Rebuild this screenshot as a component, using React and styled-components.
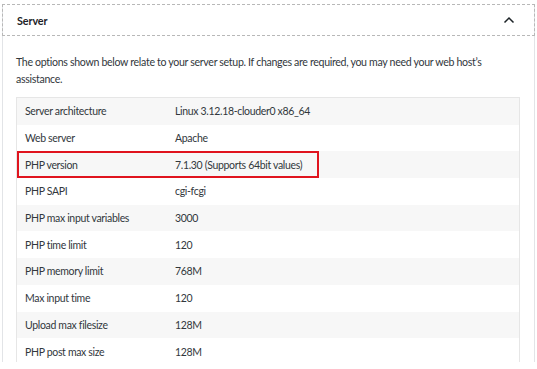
import styled, { createGlobalStyle } from "styled-components";

const GlobalStyle = createGlobalStyle`
  html, body {
    margin: 0;
    padding: 0;
    background: #ffffff;
  }
  body {
    font-family: Lato, "Noto Sans", sans-serif;
    color: #32373c;
  }
`;

const rows = [
  ["Server architecture", "Linux 3.12.18-clouder0 x86_64"],
  ["Web server", "Apache"],
  ["PHP version", "7.1.30 (Supports 64bit values)", true],
  ["PHP SAPI", "cgi-fcgi"],
  ["PHP max input variables", "3000"],
  ["PHP time limit", "120"],
  ["PHP memory limit", "768M"],
  ["Max input time", "120"],
  ["Upload max filesize", "128M"],
  ["PHP post max size", "128M"],
];

function App() {
  return (
    <>
      <GlobalStyle />
      <Page>
        <Panel>
          <Header>
            <span className="title">Server</span>
            <svg width="12" height="8" viewBox="0 0 12 8">
              <path d="M1.5 6.5 L6 2 L10.5 6.5" fill="none" stroke="#1d2327" strokeWidth="1.5" />
            </svg>
          </Header>
          <Body>
            <Intro>
              The options shown below relate to your server setup. If changes are required, you may need your web host’s assistance.
            </Intro>
            <Table>
              {rows.map(([label, value, marked], i) => (
                <Row key={label} $striped={i % 2 === 0}>
                  <Label>{label}</Label>
                  <Value>{value}</Value>
                  {marked && <Highlight />}
                </Row>
              ))}
            </Table>
          </Body>
        </Panel>
      </Page>
    </>
  );
}

export default App;

const Page = styled.div`
  width: 537px;
  height: 362px;
  overflow: hidden;
  padding-top: 4px;
  box-sizing: border-box;
`;

const Panel = styled.div`
  margin: 0 2px 0 2px;
  border-left: 1px solid #e2e4e7;
  border-right: 1px solid #e2e4e7;
  height: 100%;
`;

const Header = styled.div`
  display: flex;
  align-items: center;
  justify-content: space-between;
  height: 32px;
  box-sizing: border-box;
  margin-left: -1px;
  margin-right: -1px;
  border: 1px dashed #b8b8b8;
  padding: 0 19px 0 14px;

  .title {
    font-size: 10.8px;
    font-weight: 700;
    letter-spacing: -0.1px;
    color: #1d2327;
  }
`;

const Body = styled.div`
  padding: 0 14px 0 13px;
`;

const Intro = styled.p`
  margin: 18px 0 9px;
  font-size: 10.6px;
  letter-spacing: -0.32px;
  line-height: 17px;
  color: #32373c;
`;

const Table = styled.div`
  border: 1px solid #e6e6e6;
  border-bottom: none;
`;

const Row = styled.div`
  position: relative;
  display: grid;
  grid-template-columns: 150px 1fr;
  height: 26.7px;
  align-items: center;
  padding-left: 8px;
  background: ${(p) => (p.$striped ? "#f7f7f7" : "#ffffff")};
  font-size: 10.5px;
  letter-spacing: -0.33px;
  color: #32373c;
`;

const Label = styled.span``;

const Value = styled.span``;

const Highlight = styled.div`
  position: absolute;
  left: 0;
  top: 0;
  width: 302px;
  height: 27px;
  box-sizing: border-box;
  border: 2px solid #e0141e;
`;
